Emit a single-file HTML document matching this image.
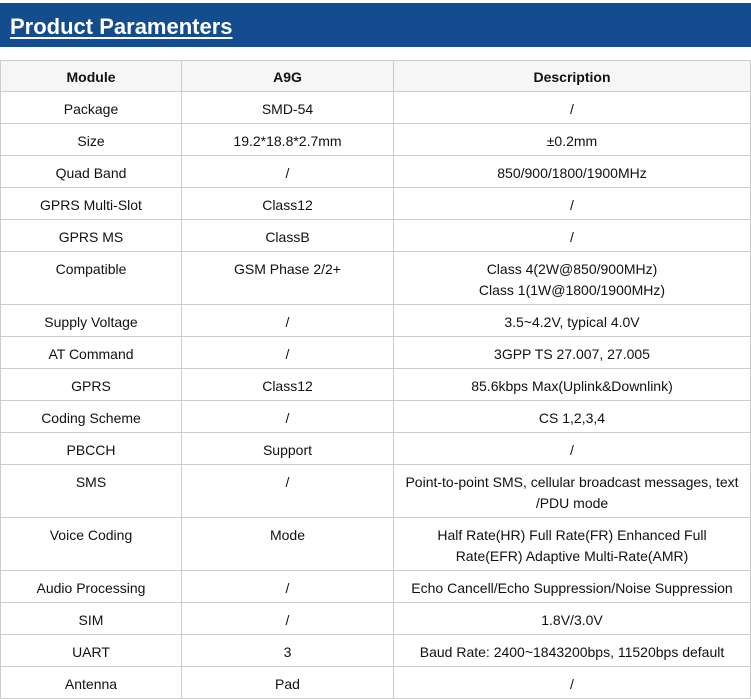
<!DOCTYPE html>
<html><head><meta charset="utf-8"><style>
body{margin:0;width:751px;height:699px;overflow:hidden;background:#fff;font-family:"Liberation Sans",Arial,sans-serif;color:#111}
.hd{position:absolute;left:0;top:3px;width:751px;height:44px;background:#134c8f}
.hd span{position:absolute;left:10px;top:11px;color:#fff;font-weight:bold;font-size:22px;text-decoration:underline;text-decoration-thickness:2px;text-underline-offset:3px}
table{position:absolute;left:0;top:60px;border-collapse:collapse;table-layout:fixed;width:750px}
td,th{border:1px solid #ccc;font-size:14px;text-align:center;vertical-align:top;padding:7px 8px 0;line-height:21px;box-sizing:border-box}
th{background:#f6f6f7;height:31px;font-weight:bold;padding-top:6px}
tr{height:32px}
tr.h{height:31px}
tr.t td{height:53px}
</style></head><body>
<div class="hd"><span>Product Paramenters</span></div>
<table>
<colgroup><col style="width:181px"><col style="width:212px"><col style="width:357px"></colgroup>
<tr class="h"><th>Module</th><th>A9G</th><th>Description</th></tr>
<tr><td>Package</td><td>SMD-54</td><td>/</td></tr>
<tr><td>Size</td><td>19.2*18.8*2.7mm</td><td>±0.2mm</td></tr>
<tr><td>Quad Band</td><td>/</td><td>850/900/1800/1900MHz</td></tr>
<tr><td>GPRS Multi-Slot</td><td>Class12</td><td>/</td></tr>
<tr><td>GPRS MS</td><td>ClassB</td><td>/</td></tr>
<tr class="t"><td>Compatible</td><td>GSM Phase 2/2+</td><td>Class 4(2W@850/900MHz)<br>Class 1(1W@1800/1900MHz)</td></tr>
<tr><td>Supply Voltage</td><td>/</td><td>3.5~4.2V, typical 4.0V</td></tr>
<tr><td>AT Command</td><td>/</td><td>3GPP TS 27.007, 27.005</td></tr>
<tr><td>GPRS</td><td>Class12</td><td>85.6kbps Max(Uplink&amp;Downlink)</td></tr>
<tr><td>Coding Scheme</td><td>/</td><td>CS 1,2,3,4</td></tr>
<tr><td>PBCCH</td><td>Support</td><td>/</td></tr>
<tr class="t"><td>SMS</td><td>/</td><td>Point-to-point SMS, cellular broadcast messages, text /PDU mode</td></tr>
<tr class="t"><td>Voice Coding</td><td>Mode</td><td>Half Rate(HR) Full Rate(FR) Enhanced Full<br>Rate(EFR) Adaptive Multi-Rate(AMR)</td></tr>
<tr><td>Audio Processing</td><td>/</td><td>Echo Cancell/Echo Suppression/Noise Suppression</td></tr>
<tr><td>SIM</td><td>/</td><td>1.8V/3.0V</td></tr>
<tr><td>UART</td><td>3</td><td>Baud Rate: 2400~1843200bps, 11520bps default</td></tr>
<tr><td>Antenna</td><td>Pad</td><td>/</td></tr>
</table>
</body></html>
